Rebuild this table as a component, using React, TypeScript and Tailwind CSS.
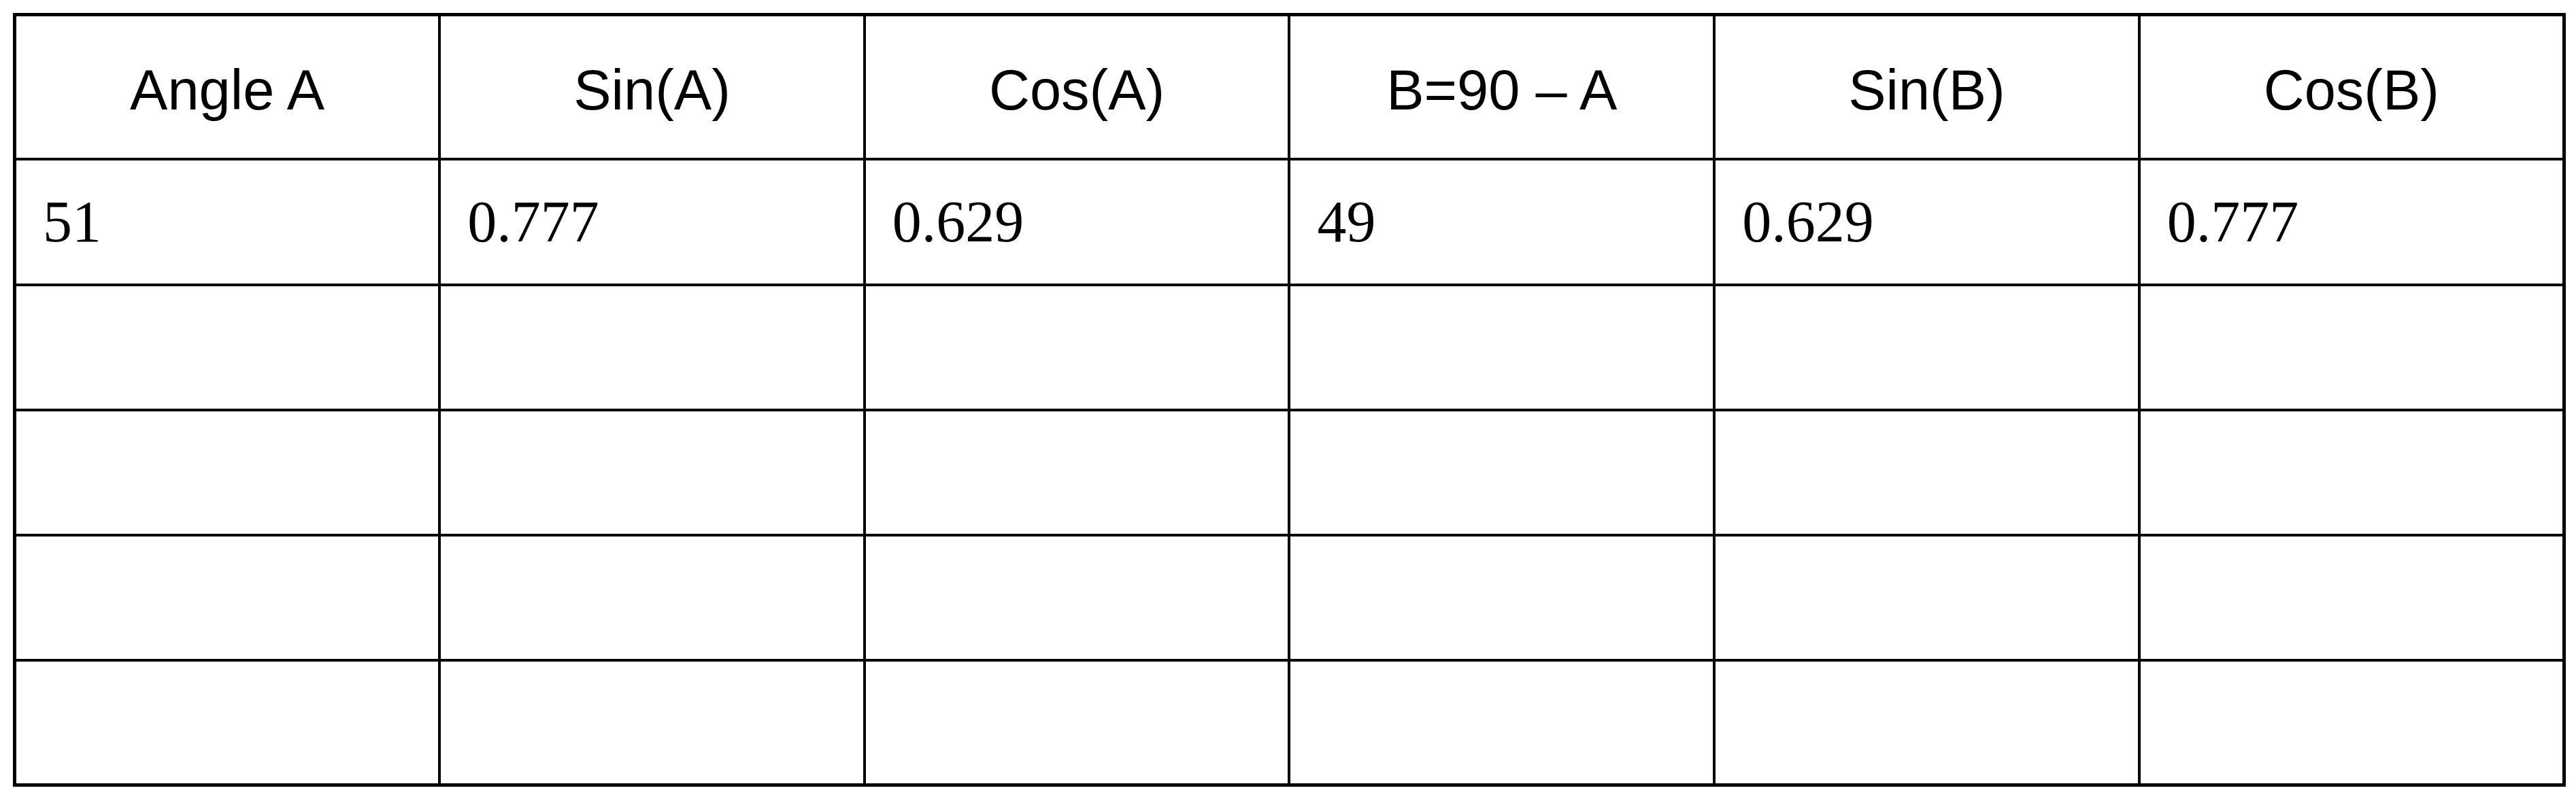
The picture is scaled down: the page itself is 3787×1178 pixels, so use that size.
const HEADERS = ["Angle A", "Sin(A)", "Cos(A)", "B=90 – A", "Sin(B)", "Cos(B)"]

const ROWS: string[][] = [
  ["51", "0.777", "0.629", "49", "0.629", "0.777"],
  ["", "", "", "", "", ""],
  ["", "", "", "", "", ""],
  ["", "", "", "", "", ""],
  ["", "", "", "", "", ""],
]

export default function App() {
  return (
    <div className="min-h-screen bg-white pl-[19px] pt-[19px]">
      <table className="w-[3753px] table-fixed border-collapse border-[5px] border-black text-black">
        <thead>
          <tr className="h-[212px]">
            {HEADERS.map((h) => (
              <th
                key={h}
                className="border-4 border-black pt-[10px] text-center align-middle font-['Liberation_Sans',Arial,sans-serif] text-[83px] font-normal leading-none"
              >
                {h}
              </th>
            ))}
          </tr>
        </thead>
        <tbody>
          {ROWS.map((row, i) => (
            <tr key={i} className={i === 0 ? "h-[185px]" : "h-[184px]"}>
              {row.map((cell, j) => (
                <td
                  key={j}
                  className="border-4 border-black pl-[39px] text-left align-middle font-['Liberation_Serif','Times_New_Roman',serif] text-[86px] leading-none"
                >
                  {cell}
                </td>
              ))}
            </tr>
          ))}
        </tbody>
      </table>
    </div>
  )
}
